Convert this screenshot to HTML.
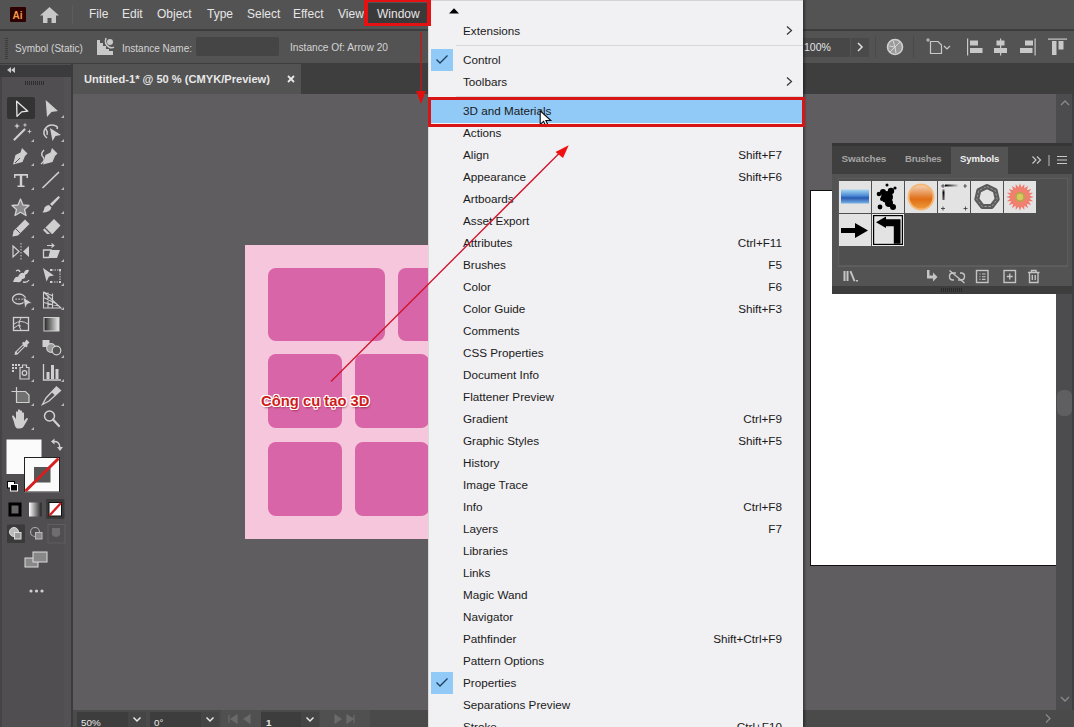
<!DOCTYPE html>
<html><head><meta charset="utf-8">
<style>
*{margin:0;padding:0;box-sizing:border-box}
html,body{width:1074px;height:727px;overflow:hidden;background:#535353;font-family:"Liberation Sans",sans-serif}
.a{position:absolute}
#menubar{left:0;top:0;width:1074px;height:29px;background:#535353}
.mi{position:absolute;top:7px;font-size:12px;color:#e6e6e6;line-height:14px}
#ctrl{left:0;top:31px;width:1074px;height:32px;background:#535353}
.ct{position:absolute;font-size:10.5px;color:#d4d4d4;line-height:12px}
#tools{left:0;top:64px;width:71px;height:663px;background:#504e51}
#tabbar{left:73px;top:64px;width:1001px;height:30px;background:#3e3e3e}
#canvas{left:73px;top:94px;width:983px;height:616px;background:#5f5d60}
#vscroll{left:1056px;top:94px;width:18px;height:616px;background:#4c4b4d}
#status{left:73px;top:710px;width:1001px;height:17px;background:#4b4a4b}
#menu{left:428px;top:0;width:375px;height:727px;background:#f1f0f2;border-left:1px solid #d9d9d9;box-shadow:2px 0 2px rgba(0,0,0,0.35)}
.it{position:absolute;left:34px;font-size:11.7px;color:#1a1a1a;line-height:14px;white-space:nowrap}
.sc{position:absolute;right:21px;font-size:11.7px;color:#1a1a1a;line-height:14px;white-space:nowrap}
</style></head>
<body>
<!-- menubar -->
<div id="menubar" class="a">
  <div class="a" style="left:10px;top:7px;width:16px;height:15px;background:#2e0000;border-radius:1px"></div>
  <div class="a" style="left:12.5px;top:8.5px;font-size:10px;font-weight:bold;color:#f29a48;line-height:13px">Ai</div>
  <svg class="a" style="left:40px;top:7px" width="19" height="17" viewBox="0 0 19 17"><path d="M9.5 0 L19 8.5 L16 8.5 L16 16 L11.5 16 L11.5 11 L7.5 11 L7.5 16 L3 16 L3 8.5 L0 8.5 Z" fill="#c8c8c8"/></svg>
  <div class="a" style="left:72px;top:5px;width:1px;height:19px;background:#5c5c5c"></div>
  <div class="mi" style="left:89px">File</div>
  <div class="mi" style="left:122px">Edit</div>
  <div class="mi" style="left:157px">Object</div>
  <div class="mi" style="left:207px">Type</div>
  <div class="mi" style="left:247px">Select</div>
  <div class="mi" style="left:293px">Effect</div>
  <div class="mi" style="left:338px">View</div>
  <div class="a" style="left:368px;top:3px;width:61px;height:21px;background:#3b3a3b"></div>
  <div class="mi" style="left:377px">Window</div>
</div>
<div class="a" style="left:0;top:29px;width:1074px;height:2px;background:#3d3d3d"></div>
<!-- control bar -->
<div id="ctrl" class="a">
  <div class="ct" style="left:15px;top:12px;font-size:10px">Symbol (Static)</div>
  <div class="ct" style="left:122px;top:12px;font-size:10px">Instance Name:</div>
  <div class="a" style="left:196px;top:6px;width:83px;height:19px;background:#464546;border-radius:2px"></div>
  <div class="ct" style="left:290px;top:11px;font-size:10.2px">Instance Of: Arrow 20</div>
  <div class="a" style="left:800px;top:7px;width:50px;height:19px;background:#474747"></div>
  <div class="ct" style="left:804px;top:10px;font-size:10.5px;color:#e4e4e4">100%</div>
  <div class="a" style="left:851px;top:7px;width:18px;height:19px;background:#4a4a4a"></div>
</div>
<svg class="a" style="left:0;top:0" width="1074" height="64" viewBox="0 0 1074 64">
  <g fill="#3c3c3c"><rect x="5" y="38" width="3" height="1"/><rect x="5" y="40" width="3" height="1"/><rect x="5" y="42" width="3" height="1"/><rect x="5" y="44" width="3" height="1"/><rect x="5" y="46" width="3" height="1"/><rect x="5" y="48" width="3" height="1"/><rect x="5" y="50" width="3" height="1"/><rect x="5" y="52" width="3" height="1"/><rect x="5" y="54" width="3" height="1"/><rect x="5" y="56" width="3" height="1"/><rect x="5" y="58" width="3" height="1"/></g>
  <path d="M97 40 H100 V43 H103 V46 H106 V49 H109 V51 H113 V55 H97 Z" fill="#c8c8c8"/>
  <path d="M106 38 Q104 44 109 47 Q112 48.5 114 47" fill="none" stroke="#c8c8c8" stroke-width="1.5"/>
  <circle cx="110" cy="42" r="3" fill="#c8c8c8"/>
  <path d="M858 43 L862 47 L858 51" stroke="#e0e0e0" stroke-width="1.5" fill="none"/>
  <rect x="875" y="36" width="1" height="22" fill="#4a4a4a"/>
  <circle cx="895" cy="47" r="7.5" fill="#9a9a9a" stroke="#d0d0d0" stroke-width="1.6"/>
  <path d="M895 47 L890 52 M895 47 L889.5 46 M895 47 L893 40.5 M895 47 L900 42 M895 47 L896 53" stroke="#d8d8d8" stroke-width="1"/>
  <rect x="913" y="36" width="1" height="22" fill="#4a4a4a"/>
  <path d="M926 40 H930 M928 38 V42" stroke="#c8c8c8" stroke-width="1"/>
  <path d="M930.5 41.5 H938 L941.5 45 V53.5 H930.5 Z" fill="#5a5a5a" stroke="#c8c8c8" stroke-width="1.2"/>
  <path d="M944 46 L947 49 L950 46" stroke="#c8c8c8" stroke-width="1.2" fill="none"/>
  <g fill="#c8c8c8">
    <rect x="967" y="38.5" width="1.2" height="17"/><rect x="970" y="40.5" width="8" height="5"/><rect x="970" y="48" width="12.5" height="5"/>
    <rect x="1000" y="38.5" width="1.2" height="17"/><rect x="996.5" y="40.5" width="8" height="5"/><rect x="994" y="48" width="13" height="5"/>
    <rect x="1034.5" y="38.5" width="1.2" height="17"/><rect x="1025" y="40.5" width="8" height="5"/><rect x="1020" y="48" width="12.5" height="5"/>
    <rect x="1048" y="38.5" width="19" height="1.2"/><rect x="1052" y="41" width="4.5" height="14"/><rect x="1058.5" y="41" width="5" height="8.5"/>
  </g>
</svg>
<div class="a" style="left:0;top:63px;width:1074px;height:1px;background:#3d3d3d"></div>
<!-- tools -->
<div id="tools" class="a">
  <div class="a" style="left:0;top:1px;width:71px;height:12px;background:#3b3a3c"></div>
  <div class="a" style="left:0;top:13px;width:2px;height:650px;background:#454346"></div>
  <div class="a" style="left:64px;top:13px;width:7px;height:650px;background:#535154"></div>
</div>
<svg class="a" style="left:0;top:0" width="72" height="727" viewBox="0 0 72 727">
  <g fill="#c6c6c6">
    <path d="M7 70 L11 67 V73 Z M11 70 L15 67 V73 Z"/>
  </g>
  <g fill="#2e2e2e"><rect x="25" y="81" width="1" height="4"/><rect x="27" y="81" width="1" height="4"/><rect x="29" y="81" width="1" height="4"/><rect x="31" y="81" width="1" height="4"/><rect x="33" y="81" width="1" height="4"/><rect x="35" y="81" width="1" height="4"/><rect x="37" y="81" width="1" height="4"/><rect x="39" y="81" width="1" height="4"/><rect x="41" y="81" width="1" height="4"/><rect x="43" y="81" width="1" height="4"/></g>
  <rect x="7" y="97" width="28" height="22" rx="2" fill="#333333"/>
  <!-- flyout triangles -->
  <g fill="#b8b8b8">
    <path d="M64 115 V118 H61 Z"/>
    <path d="M34 139 V142 H31 Z"/><path d="M64 139 V142 H61 Z"/>
    <path d="M34 163 V166 H31 Z"/><path d="M64 163 V166 H61 Z"/>
    <path d="M34 187 V190 H31 Z"/><path d="M64 187 V190 H61 Z"/>
    <path d="M34 211 V214 H31 Z"/><path d="M64 211 V214 H61 Z"/>
    <path d="M34 235 V238 H31 Z"/><path d="M64 235 V238 H61 Z"/>
    <path d="M34 259 V262 H31 Z"/><path d="M64 259 V262 H61 Z"/>
    <path d="M34 283 V286 H31 Z"/><path d="M64 283 V286 H61 Z"/>
    <path d="M34 307 V310 H31 Z"/><path d="M64 307 V310 H61 Z"/>
    <path d="M34 355 V358 H31 Z"/><path d="M64 355 V358 H61 Z"/>
    <path d="M34 379 V382 H31 Z"/><path d="M64 379 V382 H61 Z"/>
    <path d="M34 403 V406 H31 Z"/><path d="M64 403 V406 H61 Z"/>
    <path d="M34 427 V430 H31 Z"/>
  </g>
  <!-- row1 selection -->
  <path d="M16.6 101.2 L27.8 111.2 L21.6 111.9 L17 116.4 Z" fill="none" stroke="#e8e8e8" stroke-width="1.3" stroke-linejoin="round"/>
  <path d="M45.7 100 L58 111 L51.5 112 L47 117 Z" fill="#cfcfcf"/>
  <!-- row2 magic wand / lasso -->
  <g stroke="#cfcfcf" stroke-width="2.2" stroke-linecap="round"><path d="M14.5 139.5 L24.5 129.5"/></g>
  <g fill="#d0d0d0"><path d="M17 123 L17.8 125.2 L20 126 L17.8 126.8 L17 129 L16.2 126.8 L14 126 L16.2 125.2 Z"/><path d="M25 122.5 L25.6 124.4 L27.5 125 L25.6 125.6 L25 127.5 L24.4 125.6 L22.5 125 L24.4 124.4 Z"/><path d="M29.5 129 L30.1 130.9 L32 131.5 L30.1 132.1 L29.5 134 L28.9 132.1 L27 131.5 L28.9 130.9 Z"/></g>
  <path d="M47 138 Q42 134 45 129 Q49 123 56 126 Q58 127 57 129" fill="none" stroke="#cfcfcf" stroke-width="1.6"/>
  <path d="M46 129 Q48 132 47 135" fill="none" stroke="#cfcfcf" stroke-width="1.4"/>
  <path d="M50 128 L61 135 L55.5 136 L52.5 141 Z" fill="#cfcfcf"/>
  <!-- row3 pen / curvature -->
  <path d="M22 148 L27.5 153.5 L25 156 L22.5 162 L13 164.5 L15.5 155 L20.5 152.5 Z" fill="#cfcfcf"/>
  <path d="M15 163 L20 158" stroke="#535353" stroke-width="1"/>
  <path d="M52 148 L57.5 153.5 L55 156 L52.5 162 L43 164.5 L45.5 155 L50.5 152.5 Z" fill="#cfcfcf"/>
  <path d="M44 150 Q40 154 43 157 Q46 160 41 164" fill="none" stroke="#cfcfcf" stroke-width="1.3"/>
  <!-- row4 type / line -->
  <path d="M14 174 H28 V178 H26.5 V175.8 H22.2 V185.5 H24.5 V187 H17.5 V185.5 H19.8 V175.8 H15.5 V178 H14 Z" fill="#d0d0d0"/>
  <path d="M43 187.5 L58.5 172.5" stroke="#cfcfcf" stroke-width="1.7" stroke-linecap="round"/>
  <!-- row5 star / brush -->
  <path d="M20.5 199 L23 205 L29 205.5 L24.5 209.5 L26 215.5 L20.5 212.2 L15 215.5 L16.5 209.5 L12 205.5 L18 205 Z" fill="#8a8a8a" stroke="#d0d0d0" stroke-width="1.3" stroke-linejoin="round"/>
  <path d="M58.5 196 L60 197.5 L52 206 L50 204 Z" fill="#d0d0d0"/>
  <path d="M49 205 L51.5 207.5 Q50 212.5 42.5 212.5 Q44.5 209 44.5 207.5 Q46 205 49 205 Z" fill="#d0d0d0"/>
  <!-- row6 pencil / eraser -->
  <path d="M25 219.5 L29.5 224 L18 235.5 L12.5 236.5 L13.5 231 Z" fill="#cfcfcf"/>
  <path d="M16 229 L21 234" stroke="#535353" stroke-width="1"/>
  <path d="M54 219 L60.5 225.5 L52.5 234 L47 234 L43 230 Z" fill="#cfcfcf"/>
  <path d="M45 228 L51.5 234.5" stroke="#535353" stroke-width="1.2"/>
  <!-- row7 reflect / scale-shear -->
  <path d="M13 246 L19 251.5 L13 257 Z" fill="none" stroke="#d0d0d0" stroke-width="1.2"/>
  <path d="M29 246 L23 251.5 L29 257 Z" fill="#d0d0d0"/>
  <path d="M21 243 V261" stroke="#d0d0d0" stroke-width="1" stroke-dasharray="1.5 1.5"/>
  <path d="M43.5 250 H51 L49 257.5 H43.5 Z" fill="none" stroke="#d0d0d0" stroke-width="1.3"/>
  <path d="M51 250 H60 L57 258 H48.5 Z" fill="#d0d0d0"/>
  <path d="M47 245.5 H54 M51.5 243.5 L54 245.5 L51.5 247.5" fill="none" stroke="#d0d0d0" stroke-width="1.1"/>
  <!-- row8 warp / free transform -->
  <path d="M13 282 Q15 276 18 277 Q20 272 24 273 Q25 269 29 270 Q28 274 25 275 Q26 279 22 279 Q21 283 17 282 Z" fill="#cfcfcf"/>
  <path d="M16 271 Q19 269 20 272 M23 282 Q27 283 29 280" fill="none" stroke="#cfcfcf" stroke-width="1.3"/>
  <path d="M43 268 L54 275.5 L49 276.5 L46.5 281.5 Z" fill="#cfcfcf"/>
  <g fill="#cfcfcf"><rect x="50" y="269" width="2" height="2"/><rect x="59" y="269" width="2" height="2"/><rect x="59" y="281" width="2" height="2"/><rect x="50" y="281" width="2" height="2"/></g>
  <path d="M52 270 H59 M60 271 V281 M51.5 282 H59" stroke="#cfcfcf" stroke-width="1" stroke-dasharray="1.5 1"/>
  <!-- row9 shape builder / perspective -->
  <ellipse cx="19" cy="299" rx="6.5" ry="5" fill="none" stroke="#d0d0d0" stroke-width="1.3"/>
  <g fill="#d0d0d0"><rect x="15.5" y="298.5" width="1.3" height="1.3"/><rect x="18.5" y="298.5" width="1.3" height="1.3"/><rect x="21.5" y="298.5" width="1.3" height="1.3"/></g>
  <path d="M23 297 L32 303 L27.5 304 L25 308.5 Z" fill="#d0d0d0" stroke="#535353" stroke-width="0.8"/>
  <path d="M43.5 292 V308 H61 L43.5 292 M48 292.5 V308 M52.5 293.5 V308 M43.5 297.5 L56 303.5 M43.5 302.5 L59 306 M43.5 292 L53 296" fill="none" stroke="#cfcfcf" stroke-width="1.1"/>
  <!-- row10 mesh / gradient -->
  <rect x="13.5" y="317.5" width="15" height="13" fill="none" stroke="#d0d0d0" stroke-width="1.3"/>
  <path d="M14 324 Q21 319 28 324 M21 318 Q17 324 21 330 M14 328 Q18 324 21 326" fill="none" stroke="#d0d0d0" stroke-width="1"/>
  <defs><linearGradient id="tg" x1="0" x2="1"><stop offset="0" stop-color="#222"/><stop offset="1" stop-color="#eee"/></linearGradient></defs>
  <rect x="44" y="317.5" width="15" height="13.5" fill="url(#tg)" stroke="#d0d0d0" stroke-width="1"/>
  <!-- row11 eyedropper / blend -->
  <path d="M26.5 339.5 L29.5 342.5 L27 345 L27.8 346 L26.3 347.5 L25.3 346.6 L17.5 354.5 L14.5 355 L15 352 L22.9 344.2 L22 343.2 L23.5 341.7 L24.5 342.5 Z" fill="#cfcfcf"/>
  <path d="M17 352.5 L23.5 346" stroke="#535353" stroke-width="1.2"/>
  <rect x="42.5" y="340" width="7" height="7" fill="#cfcfcf"/>
  <circle cx="51" cy="348" r="4.3" fill="#9a9a9a" stroke="#d0d0d0" stroke-width="1.2"/>
  <circle cx="56.5" cy="350.5" r="4.3" fill="#535353" stroke="#d0d0d0" stroke-width="1.2"/>
  <!-- row12 symbol sprayer / graph -->
  <g fill="#cfcfcf"><rect x="12" y="364" width="2" height="2"/><rect x="15" y="364" width="2" height="2"/><rect x="12" y="367" width="2" height="2"/><rect x="15" y="367" width="2" height="2"/><rect x="12" y="370" width="2" height="2"/><rect x="18" y="364" width="2" height="2"/></g>
  <path d="M22.5 365 H26.5 V367.5 H29 V379 H20 V367.5 H22.5 Z" fill="#555" stroke="#d0d0d0" stroke-width="1.2"/>
  <circle cx="24.5" cy="373" r="2.3" fill="none" stroke="#d0d0d0" stroke-width="1.2"/>
  <path d="M43.5 364 V380 H61" fill="none" stroke="#d0d0d0" stroke-width="1.3"/>
  <rect x="46.5" y="372" width="3" height="7" fill="#cfcfcf"/><rect x="51" y="365" width="3" height="14" fill="#cfcfcf"/><rect x="55.5" y="369" width="3" height="10" fill="#cfcfcf"/>
  <!-- row13 artboard / knife -->
  <path d="M16.5 387 V391 M11.5 391.5 H16" stroke="#cfcfcf" stroke-width="1.2"/>
  <path d="M16.5 391.5 H25.5 L29 395 V402.5 H16.5 Z" fill="#707070" stroke="#d0d0d0" stroke-width="1.2"/>
  <path d="M56.5 387 L60.5 390.5 L49 401 L42.5 404.5 L46 398 Z" fill="none" stroke="#cfcfcf" stroke-width="1.3"/>
  <path d="M56.5 387 L60.5 390.5 L55 395.5 L51.5 392 Z" fill="#cfcfcf"/>
  <!-- row14 hand / zoom -->
  <path d="M14 422 L12 416.5 Q12 415 13.5 415.5 L16 419 V412 Q16.5 410.5 18 412 V418 V410 Q18.5 408.5 20 410 V418 V411 Q20.5 409.5 22 411 V418 V413 Q22.5 411.5 24 413 V421 L26 418.5 Q27.5 417.5 28 419 L24.5 425 Q23 428.5 19.5 428.5 H17.5 Q15 428 14 422 Z" fill="#cfcfcf"/>
  <circle cx="49.5" cy="416" r="5" fill="none" stroke="#d0d0d0" stroke-width="1.5"/>
  <path d="M53 419.5 L59 426" stroke="#d0d0d0" stroke-width="2.2" stroke-linecap="round"/>
  <!-- fill / stroke -->
  <rect x="6.5" y="439.5" width="35" height="34.5" fill="#fbfbfb"/>
  <rect x="24" y="457" width="36" height="35.5" fill="#fbfbfb"/>
  <rect x="24.5" y="457.5" width="35" height="34.5" fill="none" stroke="#222" stroke-width="1"/>
  <rect x="34" y="467" width="16.5" height="15.5" fill="#555555"/>
  <path d="M25.5 491 L58.5 458.5" stroke="#d42020" stroke-width="3"/>
  <path d="M53.5 441.5 Q59.5 441 60 447.5" fill="none" stroke="#d0d0d0" stroke-width="1.5"/>
  <path d="M54.5 438.5 L51 441.5 L54.5 444.5 Z M57 447 L60 451 L63 447 Z" fill="#d0d0d0"/>
  <rect x="7.5" y="481.5" width="7" height="6.5" fill="#fff" stroke="#000" stroke-width="1"/>
  <rect x="10.5" y="484.5" width="7" height="6.5" fill="#000" stroke="#fff" stroke-width="1"/>
  <!-- color modes -->
  <rect x="8.5" y="502.5" width="13" height="14" fill="#000"/>
  <rect x="11.5" y="505.5" width="7" height="8" fill="#666"/>
  <defs><linearGradient id="tg2" x1="0" x2="1"><stop offset="0" stop-color="#fff"/><stop offset="1" stop-color="#222"/></linearGradient></defs>
  <rect x="29" y="502.5" width="12.5" height="14" fill="url(#tg2)"/>
  <rect x="46" y="499" width="18.5" height="20" rx="1" fill="#3a3a3a"/>
  <rect x="49" y="502.5" width="12.5" height="13.5" fill="#fff" stroke="#111" stroke-width="1"/>
  <path d="M49.5 515.5 L61 503" stroke="#d42020" stroke-width="2.3"/>
  <!-- draw modes -->
  <rect x="7" y="524.5" width="18" height="18.5" rx="1" fill="#3a3a3a"/>
  <circle cx="14" cy="532" r="4.5" fill="#bbb" stroke="#ddd" stroke-width="1"/>
  <rect x="14.5" y="532.5" width="6.5" height="6.5" fill="#9a9a9a" stroke="#ddd" stroke-width="1"/>
  <circle cx="35" cy="532" r="4.5" fill="none" stroke="#aaa" stroke-width="1.2"/>
  <rect x="35.5" y="532.5" width="6.5" height="6.5" fill="#888" stroke="#bbb" stroke-width="1"/>
  <rect x="48" y="524.5" width="17" height="18.5" fill="none" stroke="#5e5e5e" stroke-width="1"/>
  <path d="M52 528 H60 V535 Q56 539 52 535 Z" fill="#6e6e6e"/>
  <!-- screen mode -->
  <rect x="25" y="558" width="13" height="9" fill="#888" stroke="#ddd" stroke-width="1"/>
  <rect x="33" y="552" width="14" height="10" fill="#888" stroke="#ddd" stroke-width="1"/>
  <!-- more -->
  <circle cx="31" cy="591" r="1.6" fill="#cfcfcf"/><circle cx="36.5" cy="591" r="1.6" fill="#cfcfcf"/><circle cx="42" cy="591" r="1.6" fill="#cfcfcf"/>
</svg>
<div class="a" style="left:71px;top:64px;width:2px;height:663px;background:#3b3b3b"></div>
<!-- tabs -->
<div id="tabbar" class="a">
  <div class="a" style="left:0;top:0;width:228px;height:30px;background:#535353"></div>
  <div class="a" style="left:11px;top:8px;font-size:11.1px;font-weight:bold;color:#e8e8e8;line-height:14px;white-space:nowrap">Untitled-1* @ 50 % (CMYK/Preview)</div>
  <svg class="a" style="left:214px;top:11px" width="8" height="8" viewBox="0 0 8 8"><path d="M1 1 L7 7 M7 1 L1 7" stroke="#e8e8e8" stroke-width="1.8"/></svg>
</div>
<div id="canvas" class="a">
  <div class="a" style="left:172px;top:151px;width:183px;height:294px;background:#f5c6dc;overflow:hidden">
    <div class="a" style="left:23px;top:23px;width:117px;height:73px;background:#d865a7;border-radius:8px"></div>
    <div class="a" style="left:153px;top:23px;width:117px;height:73px;background:#d865a7;border-radius:8px"></div>
    <div class="a" style="left:23px;top:109px;width:74px;height:74px;background:#d865a7;border-radius:8px"></div>
    <div class="a" style="left:110px;top:109px;width:74px;height:74px;background:#d865a7;border-radius:8px"></div>
    <div class="a" style="left:23px;top:197px;width:74px;height:74px;background:#d865a7;border-radius:8px"></div>
    <div class="a" style="left:110px;top:197px;width:74px;height:74px;background:#d865a7;border-radius:8px"></div>
  </div>
  <div class="a" style="left:737px;top:96px;width:247px;height:376px;background:#fff;border:1px solid #111"></div>
</div>
<div id="vscroll" class="a">
  <svg class="a" style="left:3px;top:5px" width="12" height="8" viewBox="0 0 12 8"><path d="M2 6 L6 2 L10 6" stroke="#8a8a8a" stroke-width="1.3" fill="none"/></svg>
  <div class="a" style="left:1px;top:296px;width:15px;height:26px;background:#5f5e60;border-radius:6px"></div>
  <div class="a" style="left:16px;top:0;width:2px;height:616px;background:#3f3e40"></div>
  <svg class="a" style="left:3px;top:601px" width="12" height="8" viewBox="0 0 12 8"><path d="M2 2 L6 6 L10 2" stroke="#8a8a8a" stroke-width="1.3" fill="none"/></svg>
</div>
<div id="status" class="a">
  <div class="a" style="left:4px;top:2px;width:51px;height:15px;background:#3d3d3d"></div>
  <div class="a" style="left:8px;top:5.5px;font-size:9.8px;color:#e8e8e8;line-height:13px">50%</div>
  <div class="a" style="left:55px;top:2px;width:18px;height:15px;background:#454545"></div>
  <svg class="a" style="left:59px;top:6px" width="10" height="7" viewBox="0 0 10 7"><path d="M1.5 1.5 L5 5 L8.5 1.5" stroke="#e8e8e8" stroke-width="1.5" fill="none"/></svg>
  <div class="a" style="left:77px;top:2px;width:51px;height:15px;background:#3d3d3d"></div>
  <div class="a" style="left:81px;top:5.5px;font-size:9.8px;color:#e8e8e8;line-height:13px">0°</div>
  <div class="a" style="left:128px;top:2px;width:18px;height:15px;background:#454545"></div>
  <svg class="a" style="left:132px;top:6px" width="10" height="7" viewBox="0 0 10 7"><path d="M1.5 1.5 L5 5 L8.5 1.5" stroke="#e8e8e8" stroke-width="1.5" fill="none"/></svg>
  <div class="a" style="left:148px;top:0px;width:40px;height:17px;background:#505050"></div>
  <svg class="a" style="left:155px;top:4px" width="30" height="10" viewBox="0 0 30 10"><path d="M1 1 V9 M9 1 L3 5 L9 9 Z M22 1 L16 5 L22 9 Z" stroke="#6a6a6a" fill="#6a6a6a" stroke-width="1.2"/></svg>
  <div class="a" style="left:188px;top:2px;width:40px;height:15px;background:#3d3d3d"></div>
  <div class="a" style="left:193px;top:5.5px;font-size:9.8px;font-weight:bold;color:#e8e8e8;line-height:13px">1</div>
  <div class="a" style="left:228px;top:2px;width:18px;height:15px;background:#454545"></div>
  <svg class="a" style="left:232px;top:6px" width="10" height="7" viewBox="0 0 10 7"><path d="M1.5 1.5 L5 5 L8.5 1.5" stroke="#e8e8e8" stroke-width="1.5" fill="none"/></svg>
  <div class="a" style="left:247px;top:0px;width:50px;height:17px;background:#505050"></div>
  <svg class="a" style="left:260px;top:4px" width="30" height="10" viewBox="0 0 30 10"><path d="M2 1 L8 5 L2 9 Z M14 1 L20 5 L14 9 Z M21 1 V9" stroke="#6a6a6a" fill="#6a6a6a" stroke-width="1.2"/></svg>
  <svg class="a" style="left:970px;top:3px" width="10" height="11" viewBox="0 0 10 11"><path d="M3 1.5 L7 5.5 L3 9.5" stroke="#8a8a8a" stroke-width="1.3" fill="none"/></svg>
</div>
<!-- symbols panel -->
<div class="a" style="left:832px;top:143px;width:240px;height:151px;background:#535353">
  <div class="a" style="left:0;top:0;width:240px;height:31px;background:#3f3f3f"></div>
  <div class="a" style="left:0;top:0;width:240px;height:3px;background:#363636"></div>
  <div class="a" style="left:119px;top:4px;width:57px;height:27px;background:#535353"></div>
  <div class="a" style="left:9.5px;top:10px;font-size:9.9px;font-weight:bold;color:#a4a4a4;line-height:12px;letter-spacing:-0.1px">Swatches</div>
  <div class="a" style="left:73px;top:10px;font-size:9.6px;font-weight:bold;color:#a4a4a4;line-height:12px;letter-spacing:-0.3px">Brushes</div>
  <div class="a" style="left:128px;top:10px;font-size:9.6px;font-weight:bold;color:#f0f0f0;line-height:12px;letter-spacing:-0.1px">Symbols</div>
  <svg class="a" style="left:200px;top:12px" width="40" height="12" viewBox="0 0 40 12">
    <path d="M0.5 1.5 L4 5 L0.5 8.5 M5 1.5 L8.5 5 L5 8.5" stroke="#c8c8c8" stroke-width="1.2" fill="none"/>
    <path d="M17 -1 L17 11" stroke="#bdbdbd" stroke-width="1"/>
    <path d="M25 1.5 H35 M25 5 H35 M25 8.5 H35" stroke="#c8c8c8" stroke-width="1.2"/>
  </svg>
  <div class="a" style="left:6px;top:35px;width:230px;height:88px;background:#4f4f4f;border:1px solid #5c5c5c"></div>
  <div class="a" style="left:7px;top:38px">
    <svg class="a" style="left:0;top:0" width="200" height="67" viewBox="0 0 200 67">
      <defs>
        <linearGradient id="gb" x1="0" y1="0" x2="0" y2="1"><stop offset="0" stop-color="#a8d8f0"/><stop offset="0.45" stop-color="#4a8ad6"/><stop offset="0.6" stop-color="#2858b0"/><stop offset="1" stop-color="#7ab4e6"/></linearGradient>
        <linearGradient id="go" x1="0" y1="0" x2="0" y2="1"><stop offset="0" stop-color="#f4d0b0"/><stop offset="0.45" stop-color="#e4843a"/><stop offset="0.6" stop-color="#e06e14"/><stop offset="1" stop-color="#ec9a3c"/></linearGradient>
      </defs>
      <rect x="0" y="0" width="32" height="32" fill="#e3e3e3"/>
      <rect x="33" y="0" width="32" height="32" fill="#e3e3e3"/>
      <rect x="66" y="0" width="32" height="32" fill="#e3e3e3"/>
      <rect x="99" y="0" width="32" height="32" fill="#e3e3e3"/>
      <rect x="132" y="0" width="32" height="32" fill="#e3e3e3"/>
      <rect x="165" y="0" width="32" height="32" fill="#e3e3e3"/>
      <rect x="0" y="33" width="32" height="32" fill="#e3e3e3"/>
      <rect x="33" y="33" width="32" height="32" fill="#e3e3e3"/>
      <rect x="2" y="8.5" width="28" height="14" fill="url(#gb)"/>
      <g fill="#000">
        <circle cx="48" cy="16" r="6"/><circle cx="44" cy="11" r="3"/><circle cx="52" cy="10" r="3.2"/><circle cx="50" cy="22" r="4"/>
        <circle cx="40" cy="13" r="2.3"/><circle cx="41" cy="26" r="2.4"/><circle cx="48" cy="4" r="1.5"/><circle cx="56" cy="7" r="1.6"/><circle cx="54" cy="26" r="3"/><circle cx="43" cy="18" r="2"/>
      </g>
      <circle cx="82" cy="16" r="13.5" fill="#f5b878"/>
      <circle cx="82" cy="16" r="11.5" fill="url(#go)"/>
      <defs><linearGradient id="gk" x1="0" x2="1"><stop offset="0" stop-color="#000"/><stop offset="1" stop-color="#000" stop-opacity="0.1"/></linearGradient><linearGradient id="gk2" x1="0" y1="0" x2="0" y2="1"><stop offset="0" stop-color="#000" stop-opacity="0.2"/><stop offset="0.3" stop-color="#000"/><stop offset="1" stop-color="#000" stop-opacity="0.6"/></linearGradient></defs>
      <rect x="106" y="3.5" width="13" height="2" fill="url(#gk)"/>
      <rect x="103.5" y="8" width="2" height="11" fill="url(#gk2)"/>
      <g stroke="#333" stroke-width="0.8" fill="none"><path d="M102 5 H106 M104 3 V7"/><path d="M126 3 V7 M124.5 5 H128"/><path d="M102 27.5 H106 M104 25.5 V29.5"/><path d="M126.5 25.5 V29.5 M124.5 27.5 H128.5"/></g>
      <polygon points="148.0,5.5 156.2,9.5 158.2,18.3 152.6,25.5 143.4,25.5 137.8,18.3 139.8,9.5" fill="none" stroke="#5a5a5a" stroke-width="5" stroke-linejoin="round"/><polygon points="148.0,5.5 156.2,9.5 158.2,18.3 152.6,25.5 143.4,25.5 137.8,18.3 139.8,9.5" fill="none" stroke="#9a9a9a" stroke-width="1" stroke-dasharray="2.5 1.5"/>
      <polygon points="194.8,16.0 190.4,17.5 194.1,20.3 189.5,20.3 192.2,24.1 187.7,22.7 189.1,27.2 185.3,24.5 185.3,29.1 182.5,25.4 181.0,29.8 179.5,25.4 176.7,29.1 176.7,24.5 172.9,27.2 174.3,22.7 169.8,24.1 172.5,20.3 167.9,20.3 171.6,17.5 167.2,16.0 171.6,14.5 167.9,11.7 172.5,11.7 169.8,7.9 174.3,9.3 172.9,4.8 176.7,7.5 176.7,2.9 179.5,6.6 181.0,2.2 182.5,6.6 185.3,2.9 185.3,7.5 189.1,4.8 187.7,9.3 192.2,7.9 189.5,11.7 194.1,11.7 190.4,14.5" fill="#f07a6c"/><circle cx="181" cy="16" r="10" fill="#f0806f"/><circle cx="181" cy="16" r="5" fill="#b8a848"/><circle cx="181" cy="16" r="3.2" fill="#d8c860"/>
      <path d="M2 47 H16 V42 L29 49.5 L16 57 V52 H2 Z" fill="#000"/>
      <rect x="33" y="33" width="32" height="32" fill="#f6f6f6"/>
      <rect x="34.6" y="34.6" width="28.8" height="28.8" fill="#f6f6f6" stroke="#000" stroke-width="1.3"/>
      <rect x="36.2" y="36.2" width="25.6" height="25.6" fill="#e3e3e3"/>
      <path d="M37 41.2 L47 35.5 V38.2 H61.5 V62.7 H54.8 V45.2 H47 V47 Z" fill="#000"/>
    </svg>
  </div>
  <div class="a" style="left:6px;top:123px;width:230px;height:1px;background:#5e5e5e"></div>
  <svg class="a" style="left:0;top:124px" width="240" height="20" viewBox="0 0 240 20">
    <g fill="#c4c4c4">
      <rect x="11.5" y="4" width="2" height="10"/><rect x="14.5" y="4" width="2" height="10"/>
      <path d="M17.5 4.5 L19.3 3.8 L23.5 14 L21.7 14.6 Z"/>
      <rect x="24" y="13" width="2" height="1.5"/>
      <path d="M95 3 H97.5 V8.5 H101 V5.5 L105.5 10 L101 14.5 V11.5 H95 Z"/>
    </g>
    <g stroke="#c4c4c4" stroke-width="1.4" fill="none">
      <path d="M124 6 H121 Q117.5 6 117.5 9.5 Q117.5 13 121 13 H122"/>
      <path d="M126 13 H129 Q132.5 13 132.5 9.5 Q132.5 6 129 6 H128"/>
      <path d="M117.5 3.5 L132.5 16"/>
      <rect x="144.5" y="3.5" width="11.5" height="12"/>
      <path d="M147.5 7 H148.5 M150 7 H153.5 M147.5 9.7 H148.5 M150 9.7 H153.5 M147.5 12.4 H148.5 M150 12.4 H153.5" stroke-width="1.1"/>
      <rect x="172" y="3.5" width="11.5" height="12"/><path d="M177.75 6.5 V12.5 M174.75 9.5 H180.75"/>
      <path d="M196 5.5 H207.5 M199.5 5.5 V3.5 H204 V5.5 M197.5 5.5 V15.5 H206 V5.5 M200.3 8 V13 M203.2 8 V13"/>
    </g>
  </svg>
  <div class="a" style="left:0;top:143px;width:240px;height:8px;background:#3d3d3d"></div>
  <div class="a" style="left:109px;top:145px;width:22px;height:4px;background:repeating-linear-gradient(90deg,#2a2a2a 0 1px,transparent 1px 2px)"></div>
</div>
<!-- menu -->
<div id="menu" class="a">
  <div class="a" style="left:0;top:0;width:374px;height:1px;background:#d4d4d4"></div>
  <svg class="a" style="left:20px;top:8px" width="10" height="6" viewBox="0 0 10 6"><path d="M0 5.5 L5 0.3 L10 5.5 Z" fill="#000"/></svg>
  <div class="it" style="top:24px">Extensions</div>
  <svg class="a" style="left:357px;top:26px" width="7" height="9" viewBox="0 0 7 9"><path d="M1 0.5 L5.5 4.5 L1 8.5" stroke="#333" stroke-width="1.2" fill="none"/></svg>
  <div class="a" style="left:27px;top:45px;width:347px;height:1px;background:#d7d7d7"></div>
  <div class="a" style="left:2px;top:49px;width:22px;height:22px;background:#91c9f7"></div>
  <svg class="a" style="left:6px;top:54px" width="14" height="11" viewBox="0 0 14 11"><path d="M1.5 5.5 L5 9 L12.5 1.5" stroke="#1c3f5f" stroke-width="1.3" fill="none"/></svg>
  <div class="it" style="top:53px">Control</div>
  <div class="it" style="top:75px">Toolbars</div>
  <svg class="a" style="left:357px;top:77px" width="7" height="9" viewBox="0 0 7 9"><path d="M1 0.5 L5.5 4.5 L1 8.5" stroke="#333" stroke-width="1.2" fill="none"/></svg>
  <div class="a" style="left:27px;top:96px;width:347px;height:1px;background:#d7d7d7"></div>
  <div class="a" style="left:1px;top:100px;width:372px;height:23px;background:#91c9f7"></div>
  <div class="it" style="top:104px">3D and Materials</div>
  <div class="it" style="top:126px">Actions</div>
  <div class="it" style="top:148px">Align</div>
  <div class="sc" style="top:148px">Shift+F7</div>
  <div class="it" style="top:170px">Appearance</div>
  <div class="sc" style="top:170px">Shift+F6</div>
  <div class="it" style="top:192px">Artboards</div>
  <div class="it" style="top:214px">Asset Export</div>
  <div class="it" style="top:236px">Attributes</div>
  <div class="sc" style="top:236px">Ctrl+F11</div>
  <div class="it" style="top:258px">Brushes</div>
  <div class="sc" style="top:258px">F5</div>
  <div class="it" style="top:280px">Color</div>
  <div class="sc" style="top:280px">F6</div>
  <div class="it" style="top:302px">Color Guide</div>
  <div class="sc" style="top:302px">Shift+F3</div>
  <div class="it" style="top:324px">Comments</div>
  <div class="it" style="top:346px">CSS Properties</div>
  <div class="it" style="top:368px">Document Info</div>
  <div class="it" style="top:390px">Flattener Preview</div>
  <div class="it" style="top:412px">Gradient</div>
  <div class="sc" style="top:412px">Ctrl+F9</div>
  <div class="it" style="top:434px">Graphic Styles</div>
  <div class="sc" style="top:434px">Shift+F5</div>
  <div class="it" style="top:456px">History</div>
  <div class="it" style="top:478px">Image Trace</div>
  <div class="it" style="top:500px">Info</div>
  <div class="sc" style="top:500px">Ctrl+F8</div>
  <div class="it" style="top:522px">Layers</div>
  <div class="sc" style="top:522px">F7</div>
  <div class="it" style="top:544px">Libraries</div>
  <div class="it" style="top:566px">Links</div>
  <div class="it" style="top:588px">Magic Wand</div>
  <div class="it" style="top:610px">Navigator</div>
  <div class="it" style="top:632px">Pathfinder</div>
  <div class="sc" style="top:632px">Shift+Ctrl+F9</div>
  <div class="it" style="top:654px">Pattern Options</div>
  <div class="it" style="top:676px">Properties</div>
  <div class="it" style="top:698px">Separations Preview</div>
  <div class="it" style="top:720px">Stroke</div>
  <div class="sc" style="top:720px">Ctrl+F10</div>
  <div class="a" style="left:2px;top:672px;width:22px;height:22px;background:#91c9f7"></div>
  <svg class="a" style="left:6px;top:677px" width="14" height="11" viewBox="0 0 14 11"><path d="M1.5 5.5 L5 9 L12.5 1.5" stroke="#1c3f5f" stroke-width="1.3" fill="none"/></svg>
</div>
<svg class="a" style="left:539px;top:110px" width="14" height="18" viewBox="0 0 14 18"><path d="M1.2 0.8 L1.2 14.5 L4.6 11.3 L7 16.5 L9.2 15.5 L6.9 10.5 L11.8 10.5 Z" fill="#fff" stroke="#0a0a14" stroke-width="1.1" stroke-linejoin="miter"/></svg>
<!-- annotations -->
<div class="a" style="left:364px;top:-1px;width:67px;height:27px;border:4px solid #e41212;border-top-width:3px;border-bottom-width:3.5px"></div>
<div class="a" style="left:427.7px;top:96.8px;width:377.3px;height:29.8px;border:3.4px solid #d81515"></div>
<svg class="a" style="left:0;top:0" width="1074" height="727" viewBox="0 0 1074 727">
  <path d="M421 32 V95" stroke="#c81414" stroke-width="1.3"/>
  <path d="M416 91 L425.8 91 L421 104 Z" fill="#e01010"/>
  <path d="M331 381.5 L560 152.5" stroke="#d0102a" stroke-width="1.3"/>
  <path d="M568.7 145.3 L555.5 152 L563 158 Z" fill="#f01010"/>
</svg>
<div class="a" style="left:261px;top:392.5px;font-size:14.8px;font-weight:bold;color:#cf1b1b;line-height:17px;white-space:nowrap;text-shadow:-1px -1px 0 #fff,1px -1px 0 #fff,-1px 1px 0 #fff,1px 1px 0 #fff,0 -1px 0 #fff,0 1px 0 #fff,-1px 0 0 #fff,1px 0 0 #fff,1px 2px 2px rgba(80,0,0,0.5)">Công cụ tạo 3D</div>
</body></html>
